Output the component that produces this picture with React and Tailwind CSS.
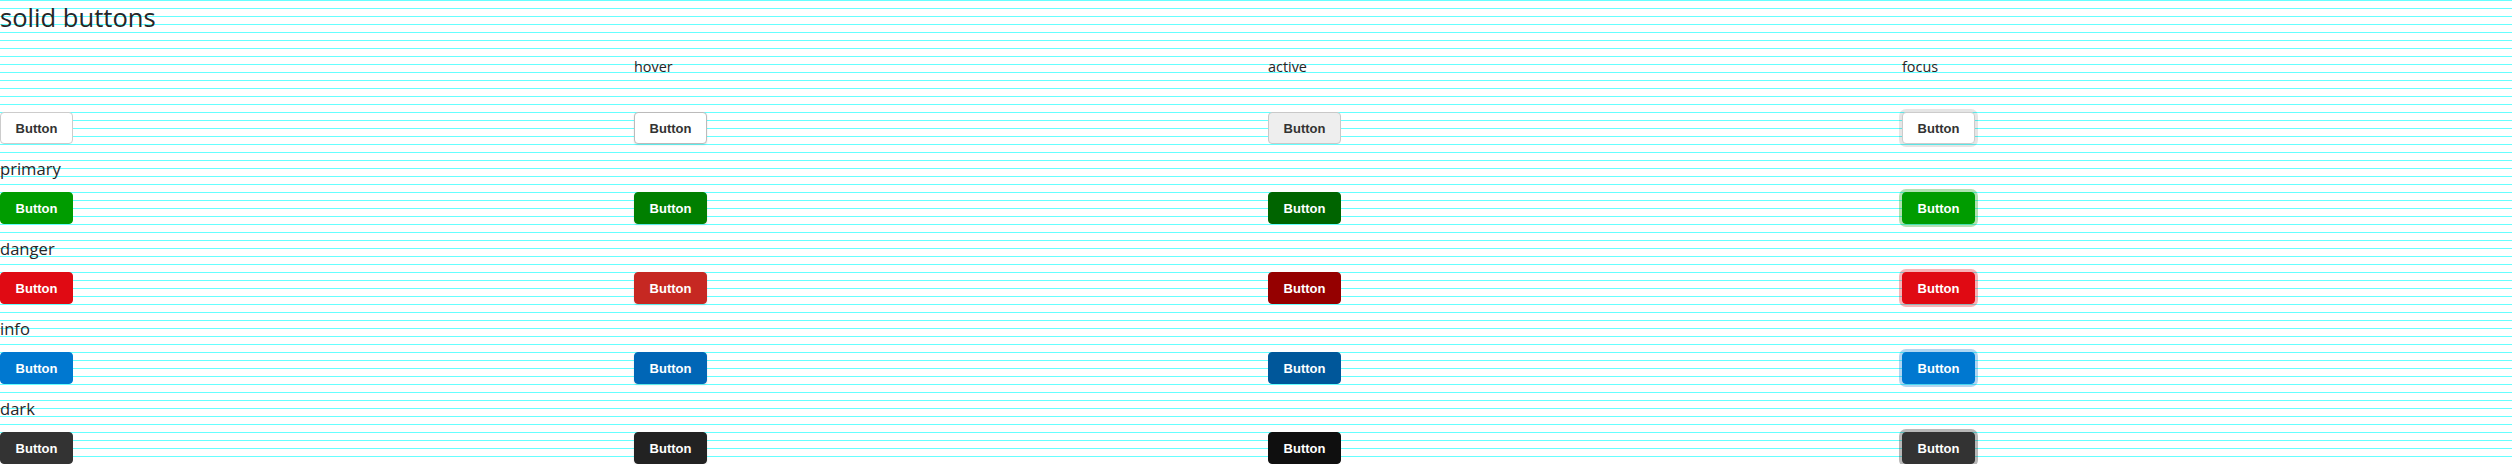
import React from "react";

const variants = [
  {
    name: null,
    base: "bg-white border-[#cccccc] text-[#333333]",
    hover: "bg-white border-[#bbbbbb] text-[#333333] shadow-[0_1px_2px_rgba(0,0,0,0.12)]",
    active: "bg-[#eeeeee] border-[#c8c8c8] text-[#333333]",
    focus: "bg-white border-[#cccccc] text-[#333333] shadow-[0_0_0_3px_rgba(0,0,0,0.1)]",
  },
  {
    name: "primary",
    base: "bg-[#009c00] border-[#009c00] text-white",
    hover: "bg-[#007f00] border-[#007f00] text-white shadow-[0_1px_2px_rgba(0,0,0,0.12)]",
    active: "bg-[#006400] border-[#006400] text-white",
    focus: "bg-[#009c00] border-[#009c00] text-white shadow-[0_0_0_3px_rgba(0,156,0,0.3)]",
  },
  {
    name: "danger",
    base: "bg-[#e00a13] border-[#e00a13] text-white",
    hover: "bg-[#c62822] border-[#c62822] text-white shadow-[0_1px_2px_rgba(0,0,0,0.12)]",
    active: "bg-[#950000] border-[#950000] text-white",
    focus: "bg-[#e00a13] border-[#e00a13] text-white shadow-[0_0_0_3px_rgba(224,10,19,0.3)]",
  },
  {
    name: "info",
    base: "bg-[#0078d0] border-[#0078d0] text-white",
    hover: "bg-[#0066b6] border-[#0066b6] text-white shadow-[0_1px_2px_rgba(0,0,0,0.12)]",
    active: "bg-[#00579a] border-[#00579a] text-white",
    focus: "bg-[#0078d0] border-[#0078d0] text-white shadow-[0_0_0_3px_rgba(0,120,208,0.3)]",
  },
  {
    name: "dark",
    base: "bg-[#333333] border-[#333333] text-white",
    hover: "bg-[#222222] border-[#222222] text-white shadow-[0_1px_2px_rgba(0,0,0,0.12)]",
    active: "bg-[#0f0f0f] border-[#0f0f0f] text-white",
    focus: "bg-[#333333] border-[#333333] text-white shadow-[0_0_0_3px_rgba(51,51,51,0.35)]",
  },
];

function Btn({ cls }) {
  return (
    <div>
      <button
        className={
          "h-8 w-[73px] rounded border font-['Liberation_Sans',Arial,sans-serif] text-[13px] font-bold leading-none " +
          cls
        }
      >
        Button
      </button>
    </div>
  );
}

function Row({ v }) {
  return (
    <div className="grid grid-cols-4 gap-x-6">
      <Btn cls={v.base} />
      <Btn cls={v.hover} />
      <Btn cls={v.active} />
      <Btn cls={v.focus} />
    </div>
  );
}

export default function App() {
  return (
    <div className="min-h-[464px] w-full overflow-hidden bg-white bg-[linear-gradient(rgba(0,255,255,0.6)_1px,transparent_1px)] bg-[length:100%_8px] font-['Open_Sans','Noto_Sans',sans-serif] text-[#262626]">
      <h1 className="text-[25.6px] font-normal leading-[35px]">solid buttons</h1>
      <div className="mt-[20px] grid grid-cols-4 gap-x-6 text-[14.4px] leading-6">
        <div></div>
        <div>hover</div>
        <div>active</div>
        <div>focus</div>
      </div>
      <div className="mt-[33px]">
        <Row v={variants[0]} />
      </div>
      {variants.slice(1).map((v) => (
        <div key={v.name} className="pt-[13px]">
          <div className="text-[16.6px] leading-6">{v.name}</div>
          <div className="mt-[11px]">
            <Row v={v} />
          </div>
        </div>
      ))}
    </div>
  );
}
